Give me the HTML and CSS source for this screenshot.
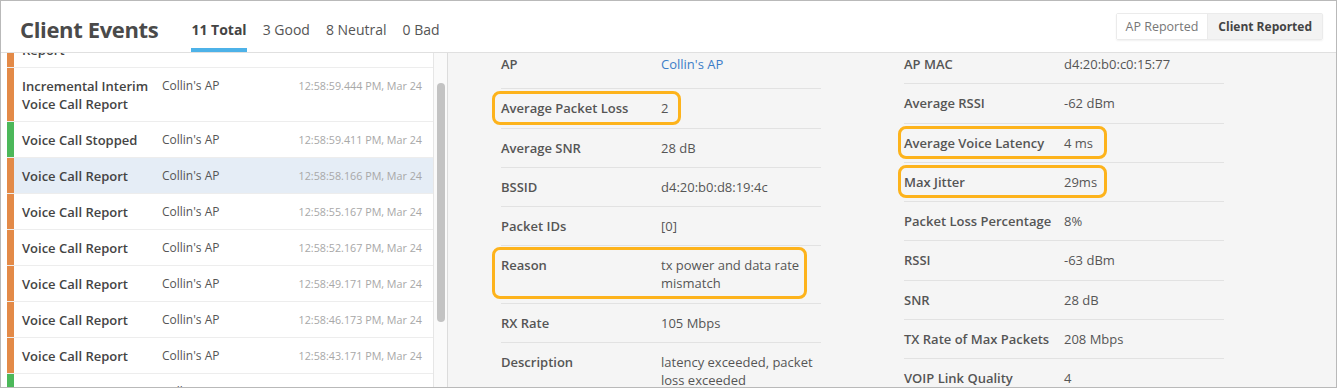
FILE: index.html
```html
<!DOCTYPE html>
<html lang="en">
<head>
  <meta charset="UTF-8">
  <title>Client Events</title>
  <link rel="stylesheet" href="styles.css">
</head>
<body>
  <div class="frame">
    <header class="header">
      <h1 class="title">Client Events</h1>
      <nav class="tabs">
        <span class="tab active">11 Total</span>
        <span class="tab">3 Good</span>
        <span class="tab">8 Neutral</span>
        <span class="tab">0 Bad</span>
      </nav>
      <div class="toggle">
        <span class="toggle-btn">AP Reported</span>
        <span class="toggle-btn selected">Client Reported</span>
      </div>
    </header>

    <div class="main">
      <div class="events">
        <div class="list">
          <div class="rows">
            <div class="event neutral">
              <div class="bar"></div>
              <div class="event-body">
                <div class="event-name">Interim Voice Call Report</div>
                <div class="event-ap">Collin's AP</div>
                <div class="event-time">12:59:02.444 PM, Mar 24</div>
              </div>
            </div>
            <div class="event neutral">
              <div class="bar"></div>
              <div class="event-body">
                <div class="event-name">Incremental Interim Voice Call Report</div>
                <div class="event-ap">Collin's AP</div>
                <div class="event-time">12:58:59.444 PM, Mar 24</div>
              </div>
            </div>
            <div class="event good">
              <div class="bar"></div>
              <div class="event-body">
                <div class="event-name">Voice Call Stopped</div>
                <div class="event-ap">Collin's AP</div>
                <div class="event-time">12:58:59.411 PM, Mar 24</div>
              </div>
            </div>
            <div class="event neutral selected">
              <div class="bar"></div>
              <div class="event-body">
                <div class="event-name">Voice Call Report</div>
                <div class="event-ap">Collin's AP</div>
                <div class="event-time">12:58:58.166 PM, Mar 24</div>
              </div>
            </div>
            <div class="event neutral">
              <div class="bar"></div>
              <div class="event-body">
                <div class="event-name">Voice Call Report</div>
                <div class="event-ap">Collin's AP</div>
                <div class="event-time">12:58:55.167 PM, Mar 24</div>
              </div>
            </div>
            <div class="event neutral">
              <div class="bar"></div>
              <div class="event-body">
                <div class="event-name">Voice Call Report</div>
                <div class="event-ap">Collin's AP</div>
                <div class="event-time">12:58:52.167 PM, Mar 24</div>
              </div>
            </div>
            <div class="event neutral">
              <div class="bar"></div>
              <div class="event-body">
                <div class="event-name">Voice Call Report</div>
                <div class="event-ap">Collin's AP</div>
                <div class="event-time">12:58:49.171 PM, Mar 24</div>
              </div>
            </div>
            <div class="event neutral">
              <div class="bar"></div>
              <div class="event-body">
                <div class="event-name">Voice Call Report</div>
                <div class="event-ap">Collin's AP</div>
                <div class="event-time">12:58:46.173 PM, Mar 24</div>
              </div>
            </div>
            <div class="event neutral">
              <div class="bar"></div>
              <div class="event-body">
                <div class="event-name">Voice Call Report</div>
                <div class="event-ap">Collin's AP</div>
                <div class="event-time">12:58:43.171 PM, Mar 24</div>
              </div>
            </div>
            <div class="event good">
              <div class="bar"></div>
              <div class="event-body">
                <div class="event-name">Voice Call Started</div>
                <div class="event-ap">Collin's AP</div>
                <div class="event-time">12:58:40.102 PM, Mar 24</div>
              </div>
            </div>
          </div>
        </div>
        <div class="scrollbar">
          <div class="thumb"></div>
        </div>
      </div>

      <div class="detail">
        <div class="col">
          <div class="field field-first">
            <span class="label">AP</span>
            <a class="value link" href="#">Collin's AP</a>
          </div>
          <div class="field hl hl-loss">
            <span class="label">Average Packet Loss</span>
            <span class="value">2</span>
          </div>
          <div class="field">
            <span class="label">Average SNR</span>
            <span class="value">28 dB</span>
          </div>
          <div class="field">
            <span class="label">BSSID</span>
            <span class="value">d4:20:b0:d8:19:4c</span>
          </div>
          <div class="field">
            <span class="label">Packet IDs</span>
            <span class="value">[0]</span>
          </div>
          <div class="field hl hl-reason">
            <span class="label">Reason</span>
            <span class="value">tx power and data rate mismatch</span>
          </div>
          <div class="field">
            <span class="label">RX Rate</span>
            <span class="value">105 Mbps</span>
          </div>
          <div class="field">
            <span class="label">Description</span>
            <span class="value">latency exceeded, packet loss exceeded</span>
          </div>
        </div>

        <div class="col col-right">
          <div class="field">
            <span class="label">AP MAC</span>
            <span class="value">d4:20:b0:c0:15:77</span>
          </div>
          <div class="field">
            <span class="label">Average RSSI</span>
            <span class="value">-62 dBm</span>
          </div>
          <div class="field hl">
            <span class="label">Average Voice Latency</span>
            <span class="value">4 ms</span>
          </div>
          <div class="field hl">
            <span class="label">Max Jitter</span>
            <span class="value">29ms</span>
          </div>
          <div class="field">
            <span class="label">Packet Loss Percentage</span>
            <span class="value">8%</span>
          </div>
          <div class="field">
            <span class="label">RSSI</span>
            <span class="value">-63 dBm</span>
          </div>
          <div class="field">
            <span class="label">SNR</span>
            <span class="value">28 dB</span>
          </div>
          <div class="field">
            <span class="label">TX Rate of Max Packets</span>
            <span class="value">208 Mbps</span>
          </div>
          <div class="field">
            <span class="label">VOIP Link Quality</span>
            <span class="value">4</span>
          </div>
        </div>
      </div>
    </div>
  </div>
</body>
</html>
```

FILE: styles.css
```css
body {
  margin: 0;
  background: #fff;
  font-family: "Open Sans", "Liberation Sans", sans-serif;
  color: #555;
}
.frame {
  width: 1337px;
  height: 388px;
  box-sizing: border-box;
  border: 1px solid #b9b9b9;
  display: flex;
  flex-direction: column;
  overflow: hidden;
}

/* header */
.header {
  height: 52px;
  box-sizing: border-box;
  flex-shrink: 0;
  display: flex;
  align-items: center;
  padding: 4px 13px 0 19px;
  border-bottom: 1px solid #e0e0e0;
  background: #fff;
}
.title {
  margin: 0 33px 0 0;
  font-size: 22px;
  line-height: 30px;
  font-weight: 700;
  color: #4a4a4a;
  letter-spacing: -0.35px;
}
.tabs {
  align-self: stretch;
  display: flex;
}
.tab {
  display: flex;
  align-items: center;
  margin-right: 16px;
  padding-top: 2px;
  font-size: 14px;
  line-height: 20px;
  color: #555;
}
.tab.active {
  font-weight: 700;
  color: #444;
  box-shadow: inset 0 -4px 0 #4db2e8;
}
.toggle {
  margin-left: auto;
  align-self: flex-start;
  margin-top: 8px;
  display: flex;
  border: 1px solid #ebebeb;
  border-radius: 2px;
  box-shadow: 0 1px 2px rgba(0, 0, 0, 0.06);
}
.toggle-btn {
  padding: 0 9px;
  line-height: 25px;
  font-size: 12.5px;
  color: #777;
  background: #fff;
}
.toggle-btn.selected {
  padding: 0 10px;
  font-size: 12px;
  font-weight: 700;
  color: #444;
  background: #f3f3f3;
  border-left: 1px solid #ebebeb;
}

/* body */
.main {
  flex: 1;
  min-height: 0;
  display: flex;
}
.events {
  display: flex;
  flex-shrink: 0;
}
.list {
  width: 433px;
  padding-left: 6px;
  box-sizing: border-box;
  border-right: 1px solid #e6e6e6;
  overflow: hidden;
  background: #fff;
}
.rows {
  margin-top: -39px;
}
.scrollbar {
  width: 13px;
  background: #fafafa;
  border-right: 1px solid #dcdcdc;
}
.thumb {
  width: 8px;
  height: 239px;
  margin: 30px 0 0 3px;
  border-radius: 5px;
  background: #c3c3c3;
}

.event {
  display: flex;
  border-bottom: 1px solid #ededed;
}
.bar {
  width: 7px;
  flex-shrink: 0;
}
.neutral .bar {
  background: #e38a48;
}
.good .bar {
  background: #4cb85a;
}
.event-body {
  flex: 1;
  display: flex;
  padding: 9px 11px 8px 8px;
  line-height: 18px;
}
.selected .event-body {
  background: #e5edf6;
}
.event-name {
  width: 140px;
  flex-shrink: 0;
  font-size: 13px;
  font-weight: 600;
  color: #444;
}
.event-ap {
  flex: 1;
  font-size: 12px;
  color: #555;
}
.event-time {
  font-size: 10.75px;
  color: #a8a8a8;
}

/* details */
.detail {
  flex: 1;
  display: flex;
  gap: 83px;
  padding-left: 53px;
  background: #f5f5f5;
  overflow: hidden;
}
.col {
  width: 320px;
  margin-top: -8px;
}
.field {
  position: relative;
  display: grid;
  grid-template-columns: 160px 1fr;
  padding: 10px 0 10.3px;
  border-bottom: 1px solid #e2e2e2;
  font-size: 13px;
  line-height: 18px;
}
.field-first {
  padding-bottom: 15.3px;
}
.label {
  font-weight: 600;
  color: #555;
}
.value {
  color: #555;
}
.link {
  color: #3c7dc8;
  text-decoration: none;
}

/* annotation boxes */
.hl::after {
  content: "";
  position: absolute;
  top: 2px;
  bottom: 3px;
  left: -9px;
  right: 117px;
  border: 3px solid #fdb31c;
  border-radius: 8px;
}
.hl-loss::after {
  right: 140px;
}
.hl-reason::after {
  top: 1px;
  bottom: 4px;
  right: 14px;
}
.col-right .hl::after {
  left: -6px;
}
```
